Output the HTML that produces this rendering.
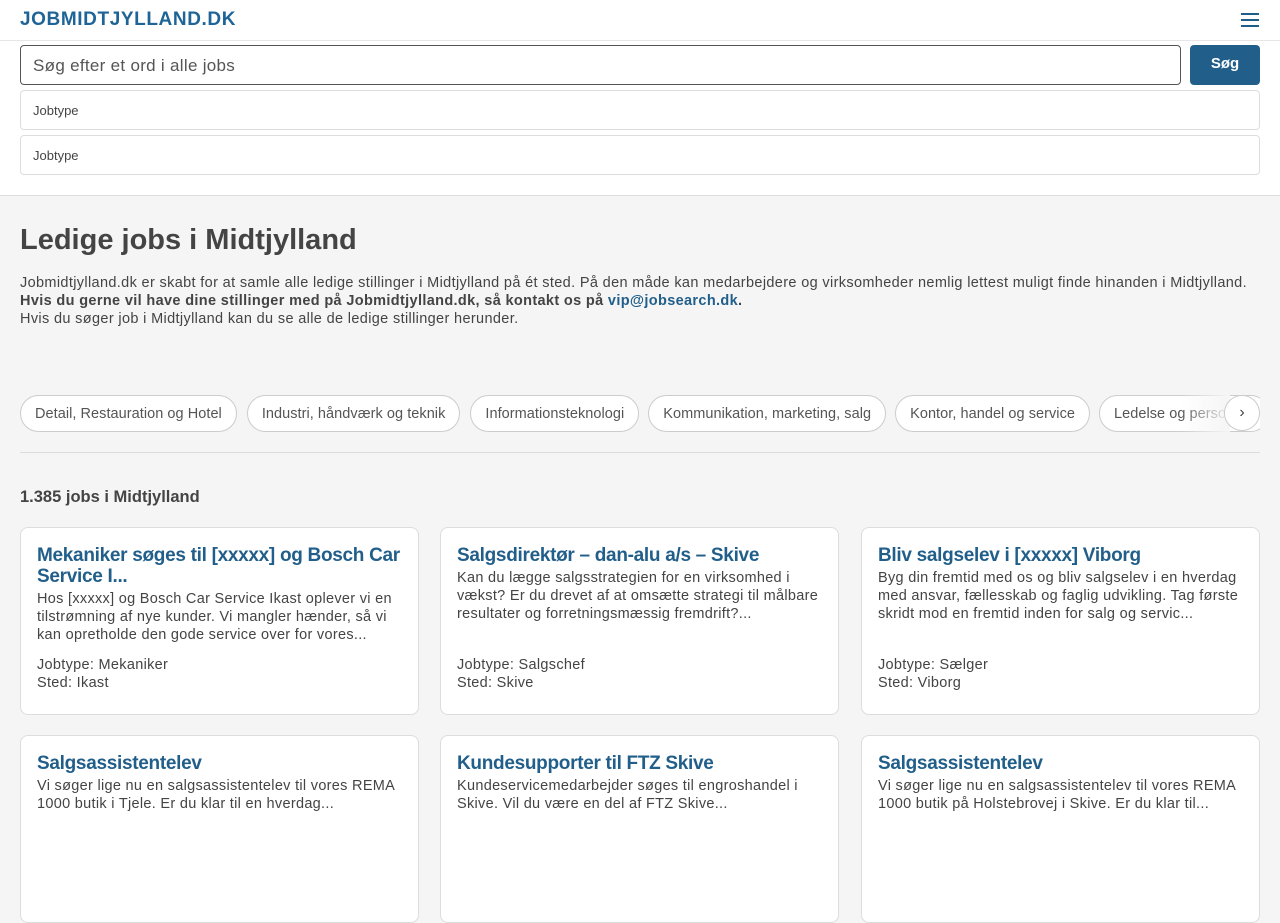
<!DOCTYPE html>
<html><head><meta charset="utf-8"><style>
*{box-sizing:border-box;margin:0;padding:0}
html,body{width:1280px;height:800px;overflow:hidden}
body{background:#f5f5f5;font-family:"Liberation Sans",sans-serif;color:#444}
.hdr{position:absolute;left:0;top:0;width:1280px;height:41px;background:#fff;border-bottom:1px solid #e6e6e6}
.logo{position:absolute;left:20px;top:9px;font-size:19px;font-weight:bold;color:#1e6497;letter-spacing:0.6px}
.burger{position:absolute;left:1241px;top:13px;width:18px}
.burger i{display:block;height:2px;background:#1e5f8a;margin-bottom:4px}
.srch{position:absolute;left:0;top:41px;width:1280px;height:155px;background:#fff;border-bottom:1px solid #ddd}
.inp{position:absolute;left:20px;top:4px;width:1161px;height:40px;border:1px solid #555;border-radius:4px;font-size:17px;color:#555;padding:10px 12px;letter-spacing:0.3px}
.btn{position:absolute;left:1190px;top:4px;width:70px;height:40px;background:#215f8a;border-radius:4px;color:#fff;font-weight:bold;font-size:15px;text-align:center;line-height:38px}
.sel{position:absolute;left:20px;width:1240px;height:40px;border:1px solid #ddd;border-radius:4px;font-size:13px;color:#444;padding:12px 12px}
h1{position:absolute;left:20px;top:224px;font-size:29px;color:#444}
.intro{position:absolute;left:20px;top:274px;font-size:14.5px;line-height:18px;width:1260px;letter-spacing:0.35px}
.intro a{color:#215f8a;font-weight:bold;text-decoration:none}
.pills{position:absolute;left:20px;top:395px;width:1240px;height:38px;overflow:hidden;white-space:nowrap}
.pill{display:inline-block;height:37px;border:1px solid #ccc;border-radius:19px;background:#fff;font-size:14.5px;padding:0 14px;line-height:37px;margin-right:7px;color:#555;letter-spacing:0.05px}
.arr{position:absolute;left:1224px;top:395px;width:36px;height:36px;border-radius:50%;border:1px solid #ccc;background:#fff;text-align:center;line-height:33px;font-size:16px}
.fade{position:absolute;left:1180px;top:395px;width:50px;height:38px;background:linear-gradient(90deg,rgba(245,245,245,0),#f5f5f5)}
.hr{position:absolute;left:20px;top:452px;width:1240px;height:1px;background:#ddd}
.cnt{position:absolute;left:20px;top:488px;font-size:16.5px;font-weight:bold}
.card{position:absolute;width:399px;height:188px;background:#fff;border:1px solid #ddd;border-radius:8px;padding:17px 16px 15px}
.card h3{font-size:19px;line-height:21px;color:#215f8a;margin-bottom:3px;letter-spacing:-0.3px}
.card p{font-size:14.5px;line-height:18px;height:54px;overflow:hidden;letter-spacing:0.3px}
.card .m{font-size:14.5px;line-height:18px;margin-top:12px;letter-spacing:0.3px}
</style></head><body>
<div class="hdr"><div class="logo">JOBMIDTJYLLAND.DK</div><div class="burger"><i></i><i></i><i></i></div></div>
<div class="srch">
<div class="inp">Søg efter et ord i alle jobs</div><div class="btn">Søg</div>
<div class="sel" style="top:49px">Jobtype</div>
<div class="sel" style="top:94px">Jobtype</div>
</div>
<h1>Ledige jobs i Midtjylland</h1>
<div class="intro">Jobmidtjylland.dk er skabt for at samle alle ledige stillinger i Midtjylland på ét sted. På den måde kan medarbejdere og virksomheder nemlig lettest muligt finde hinanden i Midtjylland.<br><b>Hvis du gerne vil have dine stillinger med på Jobmidtjylland.dk, så kontakt os på <a>vip@jobsearch.dk</a>.</b><br>Hvis du søger job i Midtjylland kan du se alle de ledige stillinger herunder.</div>
<div class="pills"><span class="pill">Detail, Restauration og Hotel</span><span class="pill" style="margin-left:3px">Industri, håndværk og teknik</span><span class="pill" style="margin-left:3px">Informationsteknologi</span><span class="pill" style="margin-left:2px">Kommunikation, marketing, salg</span><span class="pill" style="margin-left:2px">Kontor, handel og service</span><span class="pill" style="margin-left:2px">Ledelse og personale</span></div>
<div class="fade"></div><div class="arr">›</div>
<div class="hr"></div>
<div class="cnt">1.385 jobs i Midtjylland</div>
<div class="card" style="left:20px;top:527px"><h3>Mekaniker søges til [xxxxx] og Bosch Car Service I...</h3><p>Hos [xxxxx] og Bosch Car Service Ikast oplever vi en tilstrømning af nye kunder. Vi mangler hænder, så vi kan opretholde den gode service over for vores...</p><div class="m">Jobtype: Mekaniker<br>Sted: Ikast</div></div>
<div class="card" style="left:440px;top:527px"><h3>Salgsdirektør – dan-alu a/s – Skive</h3><p style="height:75px">Kan du lægge salgsstrategien for en virksomhed i vækst? Er du drevet af at omsætte strategi til målbare resultater og forretningsmæssig fremdrift?...</p><div class="m">Jobtype: Salgschef<br>Sted: Skive</div></div>
<div class="card" style="left:861px;top:527px"><h3>Bliv salgselev i [xxxxx] Viborg</h3><p style="height:75px">Byg din fremtid med os og bliv salgselev i en hverdag med ansvar, fællesskab og faglig udvikling. Tag første skridt mod en fremtid inden for salg og servic...</p><div class="m">Jobtype: Sælger<br>Sted: Viborg</div></div>
<div class="card" style="left:20px;top:735px"><h3>Salgsassistentelev</h3><p>Vi søger lige nu en salgsassistentelev til vores REMA 1000 butik i Tjele. Er du klar til en hverdag...</p></div>
<div class="card" style="left:440px;top:735px"><h3>Kundesupporter til FTZ Skive</h3><p>Kundeservicemedarbejder søges til engroshandel i Skive. Vil du være en del af FTZ Skive...</p></div>
<div class="card" style="left:861px;top:735px"><h3>Salgsassistentelev</h3><p>Vi søger lige nu en salgsassistentelev til vores REMA 1000 butik på Holstebrovej i Skive. Er du klar til...</p></div>
</body></html>
